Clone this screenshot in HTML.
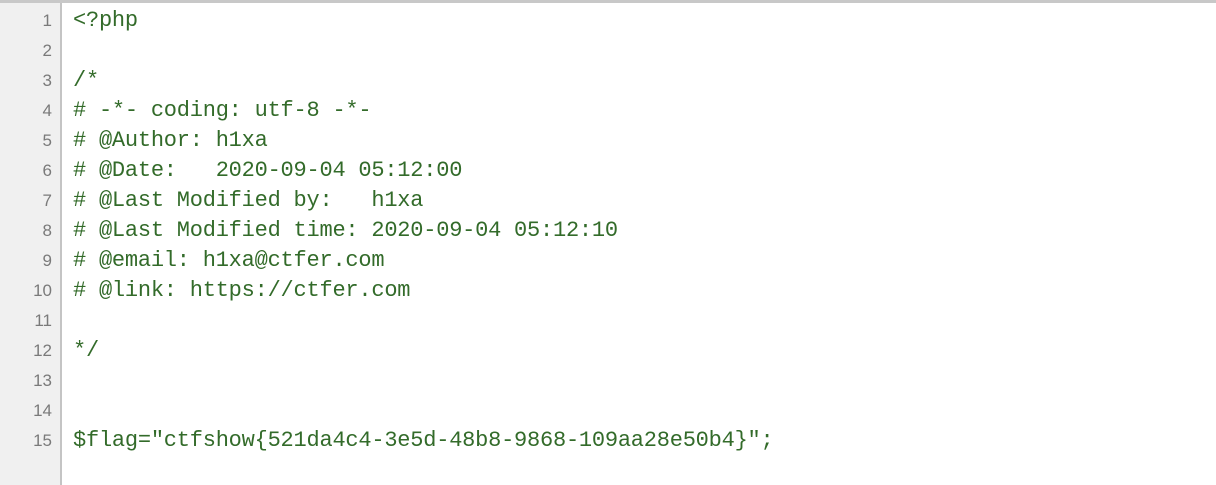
<!DOCTYPE html>
<html><head><meta charset="utf-8"><style>
html,body{margin:0;padding:0;background:#fff;width:1216px;height:485px;overflow:hidden}
.top{position:absolute;left:0;top:0;width:1216px;height:3px;background:#c8c8c8}
.gut{position:absolute;left:0;top:3px;width:60px;height:482px;background:#f0f0f0;border-right:2px solid #c4c4c4}
.ln{position:absolute;left:0;width:52px;text-align:right;font:17px "Liberation Sans",sans-serif;color:#7a7a7a;height:30px;line-height:30px}
.cd{position:absolute;left:73px;font:22px "Liberation Mono",monospace;color:#336b2a;height:30px;line-height:30px;white-space:pre;letter-spacing:-0.23px}
</style></head><body>
<div class="top"></div><div class="gut"></div>
<div class="ln" style="top:6px">1</div><div class="cd" style="top:6px">&lt;?php</div>
<div class="ln" style="top:36px">2</div>
<div class="ln" style="top:66px">3</div><div class="cd" style="top:66px">/*</div>
<div class="ln" style="top:96px">4</div><div class="cd" style="top:96px"># -*- coding: utf-8 -*-</div>
<div class="ln" style="top:126px">5</div><div class="cd" style="top:126px"># @Author: h1xa</div>
<div class="ln" style="top:156px">6</div><div class="cd" style="top:156px"># @Date:   2020-09-04 05:12:00</div>
<div class="ln" style="top:186px">7</div><div class="cd" style="top:186px"># @Last Modified by:   h1xa</div>
<div class="ln" style="top:216px">8</div><div class="cd" style="top:216px"># @Last Modified time: 2020-09-04 05:12:10</div>
<div class="ln" style="top:246px">9</div><div class="cd" style="top:246px"># @email: h1xa@ctfer.com</div>
<div class="ln" style="top:276px">10</div><div class="cd" style="top:276px"># @link: https://ctfer.com</div>
<div class="ln" style="top:306px">11</div>
<div class="ln" style="top:336px">12</div><div class="cd" style="top:336px">*/</div>
<div class="ln" style="top:366px">13</div>
<div class="ln" style="top:396px">14</div>
<div class="ln" style="top:426px">15</div><div class="cd" style="top:426px">$flag="ctfshow{521da4c4-3e5d-48b8-9868-109aa28e50b4}";</div>
</body></html>
